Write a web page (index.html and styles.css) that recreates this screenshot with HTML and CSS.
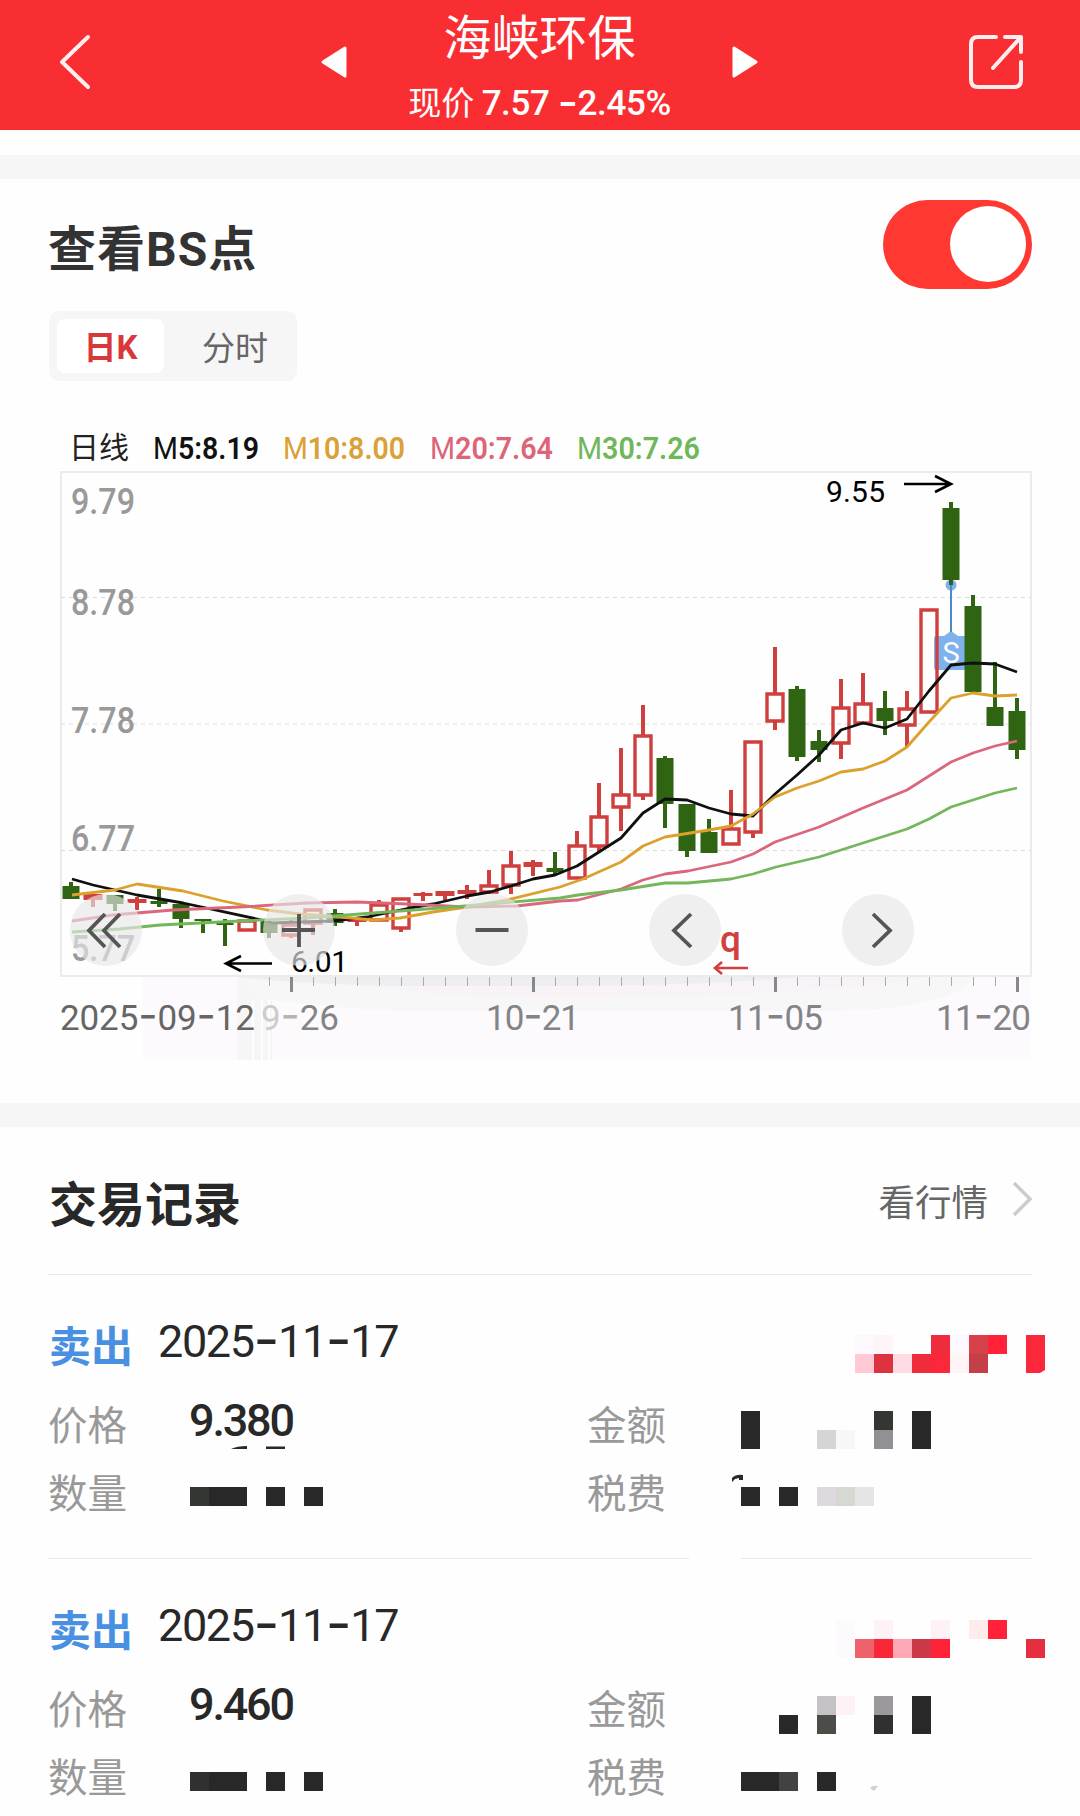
FILE: index.html
```html
<!DOCTYPE html>
<html lang="zh-CN">
<head>
<meta charset="utf-8">
<title>海峡环保</title>
<link rel="stylesheet" href="styles.css">
</head>
<body>
<header class="topbar">
  <svg class="back" width="40" height="60" viewBox="0 0 40 60"><path d="M35 5 9 30l26 25"/></svg>
  <div class="stock">
    <svg class="tri" width="28" height="34" viewBox="0 0 28 34"><path d="M24 3v28L2 17z"/></svg>
    <div class="stock-info">
      <h1>海峡环保</h1>
      <p>现价 <b>7.57 <i class="dash">-</i>2.45%</b></p>
    </div>
    <svg class="tri" width="28" height="34" viewBox="0 0 28 34"><path d="M4 3v28l22-14z"/></svg>
  </div>
  <svg class="share" width="60" height="60" viewBox="0 0 60 60"><path d="M28 5H10Q3 5 3 12V48Q3 55 10 55H46Q53 55 53 48V30M25 36 52 6M37 5H53V20"/></svg>
</header>

<section class="card chart-card">
  <div class="card-head">
    <h2>查看BS点</h2>
    <div class="switch"><span></span></div>
  </div>
  <div class="tabs"><span class="tab active">日K</span><span class="tab">分时</span></div>
  <svg class="chart" width="1080" height="680" viewBox="0 421 1080 680">
    <path fill="#fdfafe" d="M143 977H1031V1060H143z"/>
    <path fill="#f6f6f7" d="M237 977H272V1060H237z"/>
    <path fill="#f7f7f8" d="M237 977H975Q950 1011 820 1011H400Q330 1008 272 1000z"/>
    <path fill="#f7f3f6" d="M310 977H930Q800 998 540 998Q400 996 310 977z"/>
    <path fill="#eeeef0" d="M237 977H800Q700 986 540 986H400Q300 984 237 977z"/>
    <path stroke="#fefefe" stroke-width="2" d="M253 1000V1060M262 1000V1060M269 1000V1060"/>
    <g class="legend">
      <text class="cjk" x="69" y="458" textLength="60">日线</text>
      <text x="153" y="458.500" textLength="106" lengthAdjust="spacingAndGlyphs" fill="#111">M<tspan>5:8.19</tspan></text>
      <text x="283" y="458.500" textLength="122" lengthAdjust="spacingAndGlyphs" fill="#d9a136">M<tspan>10:8.00</tspan></text>
      <text x="430" y="458.500" textLength="123" lengthAdjust="spacingAndGlyphs" fill="#dc6678">M<tspan>20:7.64</tspan></text>
      <text x="577" y="458.500" textLength="123" lengthAdjust="spacingAndGlyphs" fill="#70b75a">M<tspan>30:7.26</tspan></text>
    </g>
    <rect class="frame" x="61" y="472" width="970" height="504"/>
    <path class="grid" d="M61 597.5H1031M61 724H1031M61 850.5H1031"/>
    <g class="scale">
      <text x="71" y="513.500" textLength="64" lengthAdjust="spacingAndGlyphs">9.79</text>
      <text x="71" y="614.500" textLength="64" lengthAdjust="spacingAndGlyphs">8.78</text>
      <text x="71" y="733" textLength="64" lengthAdjust="spacingAndGlyphs">7.78</text>
      <text x="71" y="851" textLength="64" lengthAdjust="spacingAndGlyphs">6.77</text>
      <text x="71" y="961" textLength="64" lengthAdjust="spacingAndGlyphs">5.77</text>
    </g>
    <!-- sell marker -->
    <path fill="#7fb1ed" d="M936 636H944L951 631L958 636H966V670H936Q934 670 934 668V638Q934 636 936 636z"/>
    <circle cx="951" cy="585" r="5.5" fill="#7fb1ed"/>
    <path d="M951 585V632" stroke="#4c8bca" stroke-width="2"/>
    <text class="marker" x="951" y="663">S</text>
    <!-- falling days -->
    <path class="wick down" d="M71 882V887M115 895V911M159 889V907M181 904V928M203 919V933M225 919V946M269 922V938M335 909V926M555 852V875M665 756V828M687 804V857M709 819V853M797 686V761M819 730V762M885 691V735M951 502V585M973 595V692M995 662V726M1017 698V759"/>
    <path class="body down" d="M71 886V899M115 895V904M159 901V904M181 904V919M203 919V921M225 923V925M269 922V933M335 913V923M555 868V872M665 758V804M687 804V851M709 832V853M797 689V757M819 741V750M885 708V721M951 508V580M973 606V692M995 707V726M1017 711V750"/>
    <!-- rising days -->
    <path class="wick up" d="M93 894V907M137 897V910M291 920V925M291 936V938M313 924V935M357 919V926M379 900V904M401 928V932M423 892V901M445 891V900M467 885V899M489 870V886M489 892V894M511 851V866M511 885V894M533 860V876M577 831V846M599 783V817M599 846V852M621 748V795M621 807V831M643 705V736M643 795V800M731 790V829M753 832V838M775 647V694M775 721V730M841 679V708M841 743V759M863 673V704M907 691V709M907 725V747"/>
    <path class="body up" d="M93 894V900M137 899V903M357 919V922M423 893V896M445 891V896M467 890V894M533 862V867"/>
    <path class="hollow" d="M239 921h16v9h-16zM283 925h16v10h-16zM305 910h16v13h-16zM371 905h16v15h-16zM393 899h16v29h-16zM481 886h16v6h-16zM503 866h16v19h-16zM569 846h16v32h-16zM591 817h16v29h-16zM613 795h16v12h-16zM635 736h16v59h-16zM723 829h16v15h-16zM745 742h16v90h-16zM767 694h16v27h-16zM833 708h16v35h-16zM855 704h16v19h-16zM899 709h16v16h-16zM921 610h16v102h-16z"/>
    <polyline class="ma" stroke="#101010" points="72,879 93,885 115,890 137,895 183,903 257,919 273,923 300,922 333,921 367,917 410,908 433,904 467,896 490,892 511,886 533,879 555,875 577,866 599,852 621,838 643,813 665,799 687,800 709,808 731,814 753,816 775,794 797,775 819,755 841,730 863,723 885,728 907,719 929,691 951,665 973,663 995,664 1017,672"/>
    <polyline class="ma" stroke="#dca12c" points="72,895 115,890 137,884 183,891 223,901 267,910 300,914 340,917 373,920 400,918 433,912 467,907 507,900 560,887 583,879 621,862 643,846 665,837 709,830 731,826 753,814 775,797 797,788 819,781 841,772 863,769 885,761 907,747 929,722 951,698 973,693 995,696 1017,695"/>
    <polyline class="ma" stroke="#da677b" points="72,921 113,915 173,910 240,907 307,903 357,902 407,904 467,907 517,906 560,901 578,900 621,889 643,880 665,874 688,871 731,862 753,854 775,842 819,827 863,808 907,790 951,762 973,753 995,746 1017,741"/>
    <polyline class="ma" stroke="#74b75b" points="72,932 120,929 160,925 240,921 307,918 373,913 440,908 490,904 560,898 578,895 621,890 665,883 688,883 731,879 753,874 776,867 819,857 841,850 885,836 907,829 929,819 951,807 995,793 1017,788"/>
    <path class="arrow" d="M904 484H950M935 476 951 484 935 492M272 963.500H227M241 956 226 963.500 241 971"/>
    <text class="extreme" x="826" y="502" textLength="59">9.55</text>
    <text class="extreme" x="291" y="972" textLength="57">6.01</text>
    <g class="controls">
      <circle cx="106" cy="930" r="36"/><circle cx="299" cy="930" r="36"/><circle cx="492" cy="930" r="36"/><circle cx="685" cy="930" r="36"/><circle cx="878" cy="930" r="36"/>
      <path d="M105 914 89 930.500 105 947M120 914 104 930.500 120 947M282 930H315M299 914V947M475.500 930H508.500M691 914 674 930.500 691 947M873 914 890 930.500 873 947"/>
    </g>
    <text class="ex-mark" x="720" y="952">q</text>
    <path d="M748 968H716M722 962 715 968 722 974" fill="none" stroke="#d0403e" stroke-width="2.600"/>
    <path stroke="#aaa" d="M269.500 977V986M313.500 977V986M335.500 977V986M357.500 977V986M379.500 977V986M401.500 977V986M423.500 977V986M445.500 977V986M467.500 977V986M489.500 977V986M511.500 977V986M555.500 977V986M577.500 977V986M599.500 977V986M621.500 977V986M643.500 977V986M665.500 977V986M687.500 977V986M709.500 977V986M731.500 977V986M753.500 977V986M797.500 977V986M819.500 977V986M841.500 977V986M863.500 977V986M885.500 977V986M907.500 977V986M929.500 977V986M951.500 977V986M973.500 977V986M995.500 977V986"/>
    <path stroke="#888" stroke-width="3" d="M291.500 977V992M533.500 977V992M775.500 977V992M1017.500 977V992"/>
    <g class="dates">
      <text x="60" y="1030" textLength="195" fill="#666">2025<tspan>-</tspan>09<tspan>-</tspan>12</text>
      <text x="261" y="1030" textLength="78"><tspan class="digit" fill="#ccc">9</tspan><tspan fill="#b5b5b5">-</tspan>26</text>
      <text x="486" y="1030" textLength="94">10<tspan>-</tspan>21</text>
      <text x="728" y="1030" textLength="95">11<tspan>-</tspan>05</text>
      <text x="936" y="1030" textLength="95">11<tspan>-</tspan>20</text>
    </g>
  </svg>
</section>

<section class="card trades">
  <div class="card-head">
    <h2>交易记录</h2>
    <a class="more">看行情<svg width="20" height="36" viewBox="0 0 20 36"><path d="M2 2 18 18 2 34"/></svg></a>
  </div>
  <article class="record">
    <div class="line first"><strong>卖出</strong><time>2025<i class="dash">-</i>11<i class="dash">-</i>17</time></div>
    <div class="line"><span>价格</span><b>9.380</b><span>金额</span></div>
    <div class="line"><span>数量</span><b></b><span>税费</span></div>
    <svg class="mask" width="1080" height="284" viewBox="0 1274 1080 284">
      <path fill="#fdf8fd" d="M855 1335h19v19h-19zM950 1335h19v19h-19z"/>
      <path fill="#fff4f6" d="M874 1335h19v19h-19zM950 1354h19v19h-19z"/>
      <path fill="#ffc9d6" d="M855 1354h19v19h-19z"/>
      <path fill="#dc3340" d="M874 1354h19v19h-19z"/>
      <path fill="#ffdce4" d="M893 1354h19v19h-19z"/>
      <path fill="#ee2c3b" d="M912 1354h19v19h-19zM931 1335h19v19h-19z"/>
      <path fill="#fa283a" d="M931 1354h19v19h-19zM1026 1335h19v35l-5 3h-14z"/>
      <path fill="#d6424a" d="M969 1335h19v19h-19z"/>
      <path fill="#c53f49" d="M969 1354h19v19h-19z"/>
      <path fill="#ff2239" d="M988 1335h19v19h-19z"/>
      <path fill="#282828" d="M741 1411h19v38h-19zM912 1411h19v38h-19zM209 1487h38v19h-38zM266 1487h19v19h-19zM304 1487h19v19h-19zM741 1487h19v19h-19zM779 1487h19v19h-19zM231 1449Q237 1446 247 1446V1449zM266 1446.500h19v2.500h-19zM732 1482v-4q4-4 11-3v5h-4v-2l-4 1z"/>
      <path fill="#343632" d="M190 1487h19v19h-19zM874 1411h19v19h-19z"/>
      <path fill="#929094" d="M874 1430h19v19h-19z"/>
      <path fill="#d5d5d5" d="M817 1430h19v19h-19z"/>
      <path fill="#f7f7f7" d="M836 1430h19v19h-19z"/>
      <path fill="#ded9de" d="M817 1487h19v19h-19z"/>
      <path fill="#d5d9d2" d="M836 1487h19v19h-19z"/>
      <path fill="#e5e5e5" d="M855 1487h19v19h-19z"/>
    </svg>
  </article>
  <article class="record">
    <div class="line first"><strong>卖出</strong><time>2025<i class="dash">-</i>11<i class="dash">-</i>17</time></div>
    <div class="line"><span>价格</span><b>9.460</b><span>金额</span></div>
    <div class="line"><span>数量</span><b></b><span>税费</span></div>
    <svg class="mask" width="1080" height="258" viewBox="0 1558 1080 258">
      <path fill="#fefefe" d="M689 1558h52v2h-52z"/>
      <path fill="#fdfafe" d="M836 1620h19v38h-19z"/>
      <path fill="#fff2f5" d="M874 1620h19v19h-19zM931 1620h19v19h-19zM836 1696h19v19h-19z"/>
      <path fill="#feecec" d="M969 1620h19v19h-19z"/>
      <path fill="#ff2239" d="M988 1620h19v19h-19zM931 1639h19v19h-19z"/>
      <path fill="#ef626b" d="M855 1639h19v19h-19z"/>
      <path fill="#f92838" d="M874 1639h19v19h-19z"/>
      <path fill="#ffa8b5" d="M893 1639h19v19h-19z"/>
      <path fill="#cb3848" d="M912 1639h19v19h-19z"/>
      <path fill="#e52f40" d="M1026 1639h19v19h-19z"/>
      <path fill="#c4c2c5" d="M817 1696h19v19h-19z"/>
      <path fill="#9c999d" d="M874 1696h19v19h-19z"/>
      <path fill="#282828" d="M779 1715h19v19h-19zM912 1696h19v38h-19zM209 1772h38v19h-38zM266 1772h19v19h-19zM304 1772h19v19h-19zM741 1772h38v19h-38zM817 1772h19v19h-19z"/>
      <path fill="#4b4d48" d="M817 1715h19v19h-19z"/>
      <path fill="#303030" d="M874 1715h19v19h-19zM190 1772h19v19h-19z"/>
      <path fill="#424242" d="M779 1772h19v19h-19z"/>
      <path fill="#d0d0d0" d="M870 1788q2-3 8-2l-4 5z"/>
    </svg>
  </article>
</section>
</body>
</html>
```
FILE: styles.css
```css
* { box-sizing: border-box; margin: 0; padding: 0; }
body {
  width: 1080px;
  height: 1816px;
  overflow: hidden;
  background: #fefefe;
  color: #282828;
  font-family: Roboto, "Noto Sans CJK SC", sans-serif;
}
svg { display: block; flex: none; }
i, b { font-style: normal; font-weight: inherit; }

.topbar {
  display: flex;
  align-items: center;
  justify-content: space-between;
  height: 130px;
  padding: 0 52px 6px 53px;
  background: #f92e33;
  color: #fff;
}
.back path, .share path { fill: none; stroke: #fff; stroke-width: 4; stroke-linejoin: round; stroke-linecap: round; opacity: .92; }
.stock { display: flex; align-items: center; justify-content: space-between; width: 438px; height: 124px; margin-left: 18px; }
.tri { fill: #fff; stroke: #fff; stroke-width: 3; stroke-linejoin: round; }
.stock-info { text-align: center; padding-top: 3px; }
.stock-info h1 { font: 400 48px/70px "Noto Sans CJK SC", sans-serif; }
.stock-info p { font: 400 33px/48px "Noto Sans CJK SC", sans-serif; margin: 8px -10px 0; white-space: nowrap; }
.stock-info b { font-family: Roboto, sans-serif; font-weight: 500; font-size: 35px; letter-spacing: -0.4px; }
.dash { font-family: Inter, sans-serif; font-size: 1.25em; line-height: 0; position: relative; top: 2px; }

.card { border-top: 24px solid #f6f6f6; }
.card-head { display: flex; align-items: center; justify-content: space-between; padding: 0 48px; }
.card-head h2 { font: 700 48px/72px Roboto, "Noto Sans CJK SC", sans-serif; }
.chart-card { margin-top: 25px; height: 948px; }
.chart-card .card-head { height: 132px; color: #333; }
.chart-card h2 { padding-top: 10px; letter-spacing: 1px; }
.switch { width: 149px; height: 89px; border-radius: 45px; background: #ff3932; display: flex; justify-content: flex-end; align-items: center; padding: 0 6px; margin-bottom: 2px; }
.switch span { width: 76px; height: 76px; border-radius: 50%; background: #fff; }
.tabs { display: flex; width: 248px; height: 70px; margin: 0 0 40px 49px; padding: 8px; border-radius: 10px; background: #f6f6f7; }
.tab { flex: 1; text-align: center; font: 400 33px/56px Roboto, "Noto Sans CJK SC", sans-serif; color: #666; padding: 2px 0 0 17px; }
.tab.active { flex: 0 0 107px; padding: 2px 0 0; border-radius: 8px; background: #fff; color: #d9383a; font-weight: 700; font-size: 33px; line-height: 54px; }

.chart text { font-family: Roboto, sans-serif; }
.chart .cjk { font: 400 30px "Noto Sans CJK SC", sans-serif; fill: #222; }
.legend text { font-size: 32px; }
.legend tspan { font-weight: 600; }
.frame { fill: none; stroke: #ebebeb; stroke-width: 2; }
.grid { stroke: #ddd; stroke-dasharray: 4 4; }
.scale text { font-size: 36px; font-weight: 500; fill: #999; }
.wick { fill: none; stroke-width: 4; }
.body { fill: none; stroke-width: 17; }
.body.up { stroke-width: 19; }
.down { stroke: #2f6512; }
.up, .hollow { stroke: #cf3f3d; }
.hollow { fill: none; stroke-width: 3.4; }
.ma { fill: none; stroke-width: 2.8; stroke-linejoin: round; }
.chart .marker { font-size: 29px; fill: #fff; text-anchor: middle; }
.arrow { fill: none; stroke: #000; stroke-width: 2.6; }
.chart .extreme { font-size: 30px; fill: #000; }
.controls circle { fill: #e6e6e6; fill-opacity: .66; }
.controls path { fill: none; stroke: #555; stroke-width: 3.8; }
.chart .ex-mark { font: 500 37px Roboto, sans-serif; fill: #d0403e; }
.dates text { font-size: 35px; fill: #848486; }
.dates text[fill] { fill: #666; }
.dates tspan { font-family: Inter, sans-serif; font-size: 42px; }
.dates .digit { font-family: Roboto, sans-serif; font-size: 35px; }

.trades .card-head { height: 147px; padding-top: 1px; }
.trades h2 { font-family: "Noto Sans CJK SC", sans-serif; padding-left: 1px; }
.more { display: flex; align-items: center; gap: 24px; font: 400 36.5px/54px "Noto Sans CJK SC", sans-serif; color: #666; }
.more path { fill: none; stroke: #ccc; stroke-width: 3.4; }
.more svg { margin-bottom: 4px; }
.record { position: relative; height: 284px; padding: 34px 48px 0; }
.record::before { content: ""; position: absolute; left: 48px; right: 48px; top: 0; height: 1px; background: #e8e8e8; }
.line { display: grid; grid-template-columns: 141px 398px 1fr; align-items: center; height: 68px; }
.line.first { display: flex; height: 72px; margin-bottom: 9px; }
.line strong { width: 110px; padding-left: 1px; font: 700 42px/60px "Noto Sans CJK SC", sans-serif; color: #4a90e2; }
.line time, .line b { font-size: 45px; line-height: 60px; letter-spacing: -1.4px; padding-bottom: 4px; }
.line b { font-weight: 500; letter-spacing: -2.2px; }
.line span { font: 400 39.5px/58px "Noto Sans CJK SC", sans-serif; color: #999; }
.mask { position: absolute; left: 0; top: 0; }
```
